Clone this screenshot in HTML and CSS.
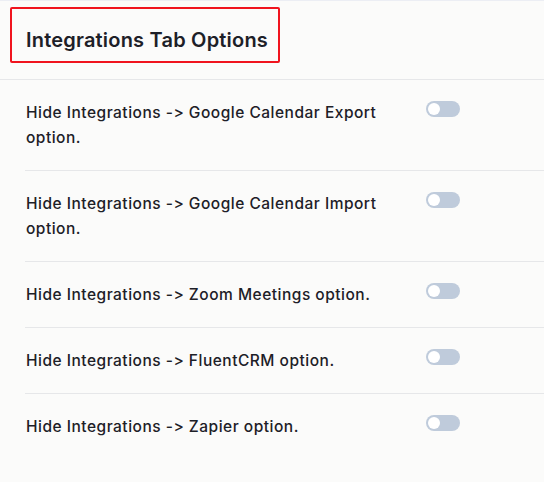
FILE: index.html
```html
<!DOCTYPE html>
<html>
<head>
<meta charset="utf-8">
<link rel="stylesheet" href="styles.css">
</head>
<body>
<div class="card">
  <div class="header">
    <div class="title-box"><h2 class="title">Integrations Tab Options</h2></div>
  </div>
  <div class="list">
    <div class="row">
      <div class="label">Hide Integrations -&gt; Google Calendar Export option.</div>
      <span class="toggle"><span class="knob"></span></span>
    </div>
    <div class="row">
      <div class="label">Hide Integrations -&gt; Google Calendar Import option.</div>
      <span class="toggle"><span class="knob"></span></span>
    </div>
    <div class="row">
      <div class="label">Hide Integrations -&gt; Zoom Meetings option.</div>
      <span class="toggle"><span class="knob"></span></span>
    </div>
    <div class="row">
      <div class="label">Hide Integrations -&gt; FluentCRM option.</div>
      <span class="toggle"><span class="knob"></span></span>
    </div>
    <div class="row last">
      <div class="label">Hide Integrations -&gt; Zapier option.</div>
      <span class="toggle"><span class="knob"></span></span>
    </div>
  </div>
</div>
</body>
</html>
```
FILE: styles.css
```css
html, body {
  margin: 0;
  padding: 0;
  background: #fbfbfa;
}
body {
  font-family: Inter, "Noto Sans", sans-serif;
  font-feature-settings: "calt" 0, "liga" 0;
  font-variant-ligatures: none;
  color: #1d2027;
}
.card {
  border-top: 1px solid #eceef4;
  min-height: 481px;
}
.header {
  padding: 6px 0 16px 10px;
  border-bottom: 1px solid #e6e7e9;
}
.title-box {
  width: 266px;
  height: 52px;
  border: 2px solid #f0141e;
  border-radius: 2px;
  display: flex;
  align-items: center;
}
.title {
  margin: 0;
  padding-left: 14px;
  padding-top: 10px;
  font-size: 20px;
  font-weight: 600;
  letter-spacing: 0.2px;
}
.list {
  margin-left: 25px;
}
.row {
  display: grid;
  grid-template-columns: 375px 34px;
  column-gap: 25px;
  padding: 20px 0 20px 1px;
  border-bottom: 1px solid #e6e7e9;
}
.row.last {
  border-bottom: none;
}
.label {
  font-size: 15.5px;
  font-weight: 500;
  line-height: 25px;
  letter-spacing: 0.5px;
}
.toggle {
  display: flex;
  align-items: center;
  width: 34px;
  height: 16px;
  margin-top: 1px;
  border-radius: 8px;
  background: #bfcbdb;
}
.knob {
  width: 12px;
  height: 12px;
  margin-left: 2px;
  border-radius: 50%;
  background: #fff;
}
```
